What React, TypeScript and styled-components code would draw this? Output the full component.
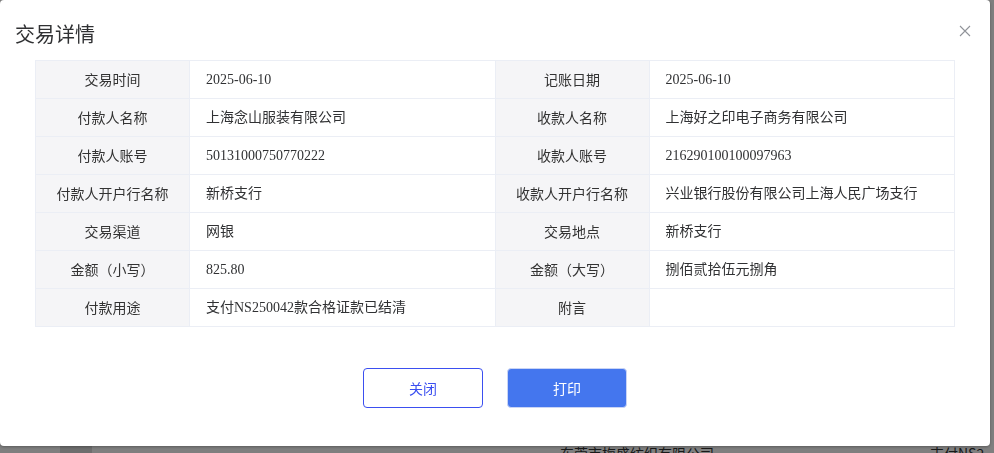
import React from 'react'
import styled, { createGlobalStyle } from 'styled-components'

const GlobalStyle = createGlobalStyle`
  html, body {
    margin: 0;
    padding: 0;
    background: #fff;
    font-family: "Noto Sans CJK SC", "Noto Sans", sans-serif;
    overflow: hidden;
  }
`

const Page = styled.div`
  height: 453px;
  padding-top: 443px;
  box-sizing: border-box;
`

const PageRow = styled.div`
  display: flex;
  height: 40px;
  font-size: 14px;
  color: #333;
  line-height: 20px;
`

const PageCell = styled.div<{ $w: number; $bg?: string }>`
  width: ${p => p.$w}px;
  background: ${p => p.$bg || 'transparent'};
  white-space: nowrap;
  overflow: hidden;
`

const Overlay = styled.div`
  position: fixed;
  inset: 0;
  background: rgba(0, 0, 0, 0.5);
  display: flex;
  align-items: flex-start;
`

const Dialog = styled.div`
  position: relative;
  width: 990px;
  height: 446px;
  background: #fff;
  border-radius: 4px;
  box-shadow: 0 1px 3px rgba(0, 0, 0, 0.3);
  box-sizing: border-box;
`

const Header = styled.div`
  padding: 20px 15px 12px;
`

const Title = styled.span`
  font-size: 20px;
  line-height: 28px;
  color: #303133;
`

const CloseBtn = styled.button`
  position: absolute;
  top: 25px;
  right: 19px;
  width: 12px;
  height: 12px;
  padding: 0;
  border: none;
  background: none;
  cursor: pointer;
  display: flex;
  align-items: center;
  justify-content: center;
`

const Body = styled.div`
  padding: 0 35px;
`

const Table = styled.table`
  width: 920px;
  border-collapse: collapse;
  table-layout: fixed;
  font-size: 14px;
  line-height: 20px;
  color: #303133;
`

const Label = styled.td`
  width: 153px;
  height: 35px;
  padding: 0 0 2px;
  border: 1px solid #ebeef5;
  background: #f5f5f7;
  text-align: center;
  color: #333;
`

const Value = styled.td`
  height: 35px;
  padding: 0 16px 2px;
  border: 1px solid #ebeef5;
  white-space: nowrap;
`

const ValueText = styled.span`
  font-family: "Liberation Serif", "Noto Sans CJK SC", serif;
`

const Footer = styled.div`
  display: flex;
  justify-content: center;
  gap: 24px;
  margin-top: 41px;
`

const Button = styled.button<{ $primary?: boolean }>`
  width: 120px;
  height: 40px;
  border-radius: 4px;
  font-size: 14px;
  font-family: "Noto Sans CJK SC", sans-serif;
  cursor: pointer;
  border: 1px solid ${p => (p.$primary ? '#c9d4f5' : '#3b4ff0')};
  background: ${p => (p.$primary ? '#4476ee' : '#fff')};
  color: ${p => (p.$primary ? '#fff' : '#3b4ff0')};
`

const rows: [string, string, string, string][] = [
  ['交易时间', '2025-06-10', '记账日期', '2025-06-10'],
  ['付款人名称', '上海念山服装有限公司', '收款人名称', '上海好之印电子商务有限公司'],
  ['付款人账号', '50131000750770222', '收款人账号', '216290100100097963'],
  ['付款人开户行名称', '新桥支行', '收款人开户行名称', '兴业银行股份有限公司上海人民广场支行'],
  ['交易渠道', '网银', '交易地点', '新桥支行'],
  ['金额（小写）', '825.80', '金额（大写）', '捌佰贰拾伍元捌角'],
  ['付款用途', '支付NS250042款合格证款已结清', '附言', ''],
]

const App = () => {
  return (
    <>
      <GlobalStyle />
      <Page>
        <PageRow>
          <PageCell $w={60} />
          <PageCell $w={32} $bg="#dcdcdc" />
          <PageCell $w={468} />
          <PageCell $w={370}>东莞市梅盛纺织有限公司</PageCell>
          <PageCell $w={64}>支付NS2</PageCell>
        </PageRow>
      </Page>
      <Overlay>
        <Dialog>
          <Header>
            <Title>交易详情</Title>
          </Header>
          <CloseBtn aria-label="close">
            <svg width="12" height="12" viewBox="0 0 12 12">
              <path d="M1 1 L11 11 M11 1 L1 11" stroke="#909399" strokeWidth="1.1" fill="none" />
            </svg>
          </CloseBtn>
          <Body>
            <Table>
              <tbody>
                {rows.map(r => (
                  <tr key={r[0]}>
                    <Label>{r[0]}</Label>
                    <Value><ValueText>{r[1]}</ValueText></Value>
                    <Label>{r[2]}</Label>
                    <Value><ValueText>{r[3]}</ValueText></Value>
                  </tr>
                ))}
              </tbody>
            </Table>
          </Body>
          <Footer>
            <Button>关闭</Button>
            <Button $primary>打印</Button>
          </Footer>
        </Dialog>
      </Overlay>
    </>
  )
}

export default App
